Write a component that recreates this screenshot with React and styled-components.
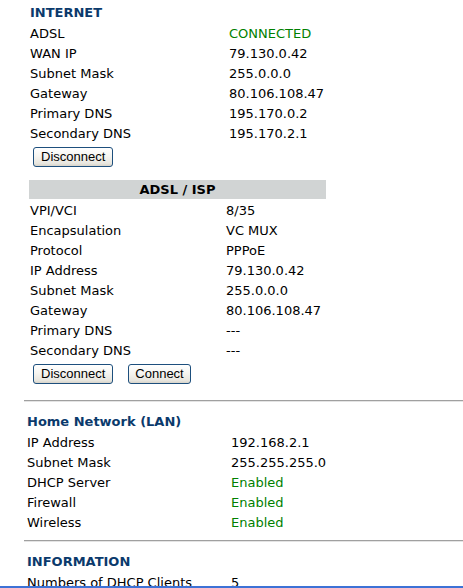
import React from "react";
import styled, { createGlobalStyle } from "styled-components";

const Global = createGlobalStyle`
  html, body { margin: 0; padding: 0; background: #fff; }
  body { font-family: "DejaVu Sans", Verdana, sans-serif; font-size: 13px; color: #000; }
`;

const Page = styled.div`
  padding-top: 3px;
  display: flex;
  flex-direction: column;
`;

const Panel = styled.section`
  padding-left: ${(p) => p.indent}px;
  width: ${(p) => (p.width ? p.width + "px" : "auto")};
  display: flex;
  flex-direction: column;
`;

const Heading = styled.h2`
  margin: 0;
  height: 20px;
  line-height: 20px;
  font-size: 13px;
  font-weight: bold;
  color: #0b3a6c;
`;

const Row = styled.div`
  display: grid;
  grid-template-columns: ${(p) => p.labelWidth}px 1fr;
  height: 20px;
  align-items: center;
  white-space: nowrap;
`;

const Value = styled.span`
  color: ${(p) => (p.ok ? "#008000" : "#000")};
`;

const ButtonRow = styled.div`
  display: flex;
  gap: 15px;
  padding: 4px 0 0 3px;
`;

const XPButton = styled.button`
  font-family: "Liberation Sans", Arial, sans-serif;
  font-size: 13px;
  height: 20px;
  padding: 0 ${(p) => p.pad || 7}px;
  border: 1px solid #1d4f7d;
  border-radius: 3px;
  background: linear-gradient(#ffffff 0%, #f6f5f1 45%, #e8e6df 85%, #d8d4ca 100%);
  color: #000;
  line-height: 18px;
`;

const BarHeader = styled.div`
  margin-top: 13px;
  height: 19px;
  line-height: 19px;
  background: #d1d4d4;
  text-align: center;
  font-weight: bold;
  margin-left: -1px;
  margin-bottom: 1px;
`;

const Rule = styled.hr`
  margin: ${(p) => p.top}px 0 10px 24px;
  border: 0;
  border-top: 1px solid #a0a0a0;
  border-bottom: 1px solid #e4e4e4;
  height: 0;
`;

const FrameEdge = styled.div`
  position: fixed;
  left: 0;
  right: 0;
  bottom: 0;
  height: 2px;
  background: #3d72d6;
`;

const internet = [
  ["ADSL", "CONNECTED", true],
  ["WAN IP", "79.130.0.42"],
  ["Subnet Mask", "255.0.0.0"],
  ["Gateway", "80.106.108.47"],
  ["Primary DNS", "195.170.0.2"],
  ["Secondary DNS", "195.170.2.1"],
];

const isp = [
  ["VPI/VCI", "8/35"],
  ["Encapsulation", "VC MUX"],
  ["Protocol", "PPPoE"],
  ["IP Address", "79.130.0.42"],
  ["Subnet Mask", "255.0.0.0"],
  ["Gateway", "80.106.108.47"],
  ["Primary DNS", "---"],
  ["Secondary DNS", "---"],
];

const lan = [
  ["IP Address", "192.168.2.1"],
  ["Subnet Mask", "255.255.255.0"],
  ["DHCP Server", "Enabled", true],
  ["Firewall", "Enabled", true],
  ["Wireless", "Enabled", true],
];

const Rows = ({ data, labelWidth }) =>
  data.map(([k, v, ok]) => (
    <Row key={k} labelWidth={labelWidth}>
      <span>{k}</span>
      <Value ok={ok}>{v}</Value>
    </Row>
  ));

export default function App() {
  return (
    <>
      <Global />
      <Page>
        <Panel indent={30} width={296}>
          <Heading>INTERNET</Heading>
          <Rows data={internet} labelWidth={199} />
          <ButtonRow>
            <XPButton>Disconnect</XPButton>
          </ButtonRow>
          <BarHeader>ADSL / ISP</BarHeader>
          <Rows data={isp} labelWidth={196} />
          <ButtonRow>
            <XPButton>Disconnect</XPButton>
            <XPButton pad={6}>Connect</XPButton>
          </ButtonRow>
        </Panel>
        <Rule top={16} />
        <Panel indent={27}>
          <Heading>Home Network (LAN)</Heading>
          <Rows data={lan} labelWidth={204} />
        </Panel>
        <Rule top={8} />
        <Panel indent={27}>
          <Heading>INFORMATION</Heading>
          <Rows data={[["Numbers of DHCP Clients", "5"]]} labelWidth={204} />
        </Panel>
      </Page>
      <FrameEdge />
    </>
  );
}
